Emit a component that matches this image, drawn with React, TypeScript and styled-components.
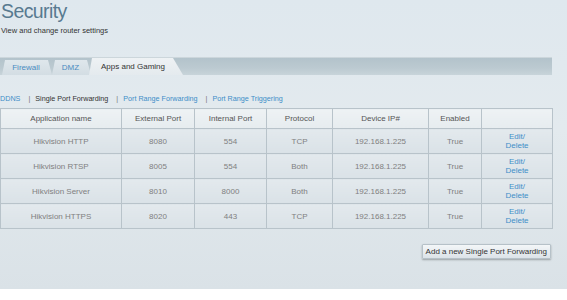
import React from "react";
import styled, { createGlobalStyle } from "styled-components";

const Global = createGlobalStyle`
  html, body { margin: 0; padding: 0; background: #ffffff; }
  body { font-family: "Liberation Sans", Arial, sans-serif; }
`;

const Page = styled.div`
  height: 289px;
  width: 567px;
  display: flex;
  flex-direction: column;
  background: linear-gradient(180deg, #dfe8ee 0%, #e3eaee 45%, #dae2e7 100%);
  overflow: hidden;
`;

const Header = styled.header`
  display: flex;
  flex-direction: column;
  padding-left: 1px;
`;

const Title = styled.h1`
  margin: 0;
  font-size: 19.5px;
  line-height: 22px;
  font-weight: normal;
  letter-spacing: -0.6px;
  color: #587a90;
`;

const Subtitle = styled.p`
  margin: 4px 0 0 0;
  font-size: 7.5px;
  line-height: 10px;
  color: #333;
`;

const TabStrip = styled.nav`
  margin-top: 21px;
  width: 552px;
  height: 18px;
  box-sizing: border-box;
  border-top: 1px solid #ccd6db;
  background: linear-gradient(180deg, #b3c3cb 0%, #bccad1 60%, #c8d4da 100%);
  display: flex;
  align-items: flex-end;
  padding-left: 2px;
`;

const Tab = styled.div<{ $active?: boolean; $w: number }>`
  width: ${(p) => p.$w}px;
  height: ${(p) => (p.$active ? 17 : 15)}px;
  display: flex;
  align-items: center;
  justify-content: center;
  font-size: 8px;
  color: ${(p) => (p.$active ? "#333" : "#4a8cc2")};
  background: ${(p) =>
    p.$active
      ? "linear-gradient(180deg, #eef2f4, #e4eaee)"
      : "linear-gradient(180deg, #dfe7ec, #d3dde3)"};
  clip-path: ${(p) =>
    p.$active
      ? "polygon(3px 0, calc(100% - 10px) 0, 100% 100%, 0 100%)"
      : "polygon(3px 0, calc(100% - 4px) 0, 100% 100%, 0 100%)"};
  margin-left: ${(p) => (p.$active ? "-2px" : "0")};
  padding-right: ${(p) => (p.$active ? "6px" : "2px")};
  box-sizing: border-box;
`;

const Content = styled.main`
  display: flex;
  flex-direction: column;
  width: 552px;
`;

const LinksRow = styled.div`
  margin-top: 19px;
  display: flex;
  align-items: center;
  font-size: 7.2px;
  line-height: 10px;
  white-space: nowrap;
`;

const NavLink = styled.span<{ $current?: boolean }>`
  color: ${(p) => (p.$current ? "#333" : "#3e8ec8")};
`;

const Sep = styled.span`
  color: #777;
  margin: 0 5px 0 8px;
`;

const Table = styled.table`
  margin-top: 4px;
  width: 552px;
  table-layout: fixed;
  border-collapse: collapse;
  font-size: 8px;
  text-align: center;
  border: 1px solid #b8c3ca;
`;

const Th = styled.th`
  height: 19px;
  padding: 0;
  font-weight: normal;
  color: #555;
  background: linear-gradient(180deg, #eef2f4, #e6ecef);
  border: 1px solid #b8c3ca;
`;

const Td = styled.td`
  height: 24px;
  padding: 0;
  color: #808080;
  background: linear-gradient(180deg, #e3e9ed, #dae2e7);
  border: 1px solid #b8c3ca;
`;

const Action = styled.span`
  display: block;
  color: #3e8ec8;
  line-height: 9px;
`;

const ButtonRow = styled.div`
  margin-top: 15px;
  display: flex;
  justify-content: flex-end;
  padding-right: 1px;
`;

const Button = styled.button`
  height: 15px;
  padding: 0 3px;
  font-family: "Liberation Sans", Arial, sans-serif;
  font-size: 8px;
  color: #333;
  border: 1px solid #b6c1c8;
  border-radius: 1px;
  background: linear-gradient(180deg, #f3f6f8, #dce3e8);
  box-shadow: 0 1px 2px rgba(0, 0, 0, 0.3);
  white-space: nowrap;
`;

const cols = [121, 73, 72, 66, 96, 53, 71];
const headers = [
  "Application name",
  "External Port",
  "Internal Port",
  "Protocol",
  "Device IP#",
  "Enabled",
  "",
];

const rows = [
  ["Hikvision HTTP", "8080", "554", "TCP", "192.168.1.225", "True"],
  ["Hikvision RTSP", "8005", "554", "Both", "192.168.1.225", "True"],
  ["Hikvision Server", "8010", "8000", "Both", "192.168.1.225", "True"],
  ["Hikvision HTTPS", "8020", "443", "TCP", "192.168.1.225", "True"],
];

export default function App() {
  return (
    <>
      <Global />
      <Page>
        <Header>
          <Title>Security</Title>
          <Subtitle>View and change router settings</Subtitle>
        </Header>
        <TabStrip>
          <Tab $w={50}>Firewall</Tab>
          <Tab $w={39}>DMZ</Tab>
          <Tab $w={94} $active>
            Apps and Gaming
          </Tab>
        </TabStrip>
        <Content>
          <LinksRow>
            <NavLink>DDNS</NavLink>
            <Sep>|</Sep>
            <NavLink $current>Single Port Forwarding</NavLink>
            <Sep>|</Sep>
            <NavLink>Port Range Forwarding</NavLink>
            <Sep>|</Sep>
            <NavLink>Port Range Triggering</NavLink>
          </LinksRow>
          <Table>
            <colgroup>
              {cols.map((w, i) => (
                <col key={i} style={{ width: w }} />
              ))}
            </colgroup>
            <thead>
              <tr>
                {headers.map((h, i) => (
                  <Th key={i}>{h}</Th>
                ))}
              </tr>
            </thead>
            <tbody>
              {rows.map((r, i) => (
                <tr key={i}>
                  {r.map((c, j) => (
                    <Td key={j}>{c}</Td>
                  ))}
                  <Td>
                    <Action>Edit/</Action>
                    <Action>Delete</Action>
                  </Td>
                </tr>
              ))}
            </tbody>
          </Table>
          <ButtonRow>
            <Button>Add a new Single Port Forwarding</Button>
          </ButtonRow>
        </Content>
      </Page>
    </>
  );
}
